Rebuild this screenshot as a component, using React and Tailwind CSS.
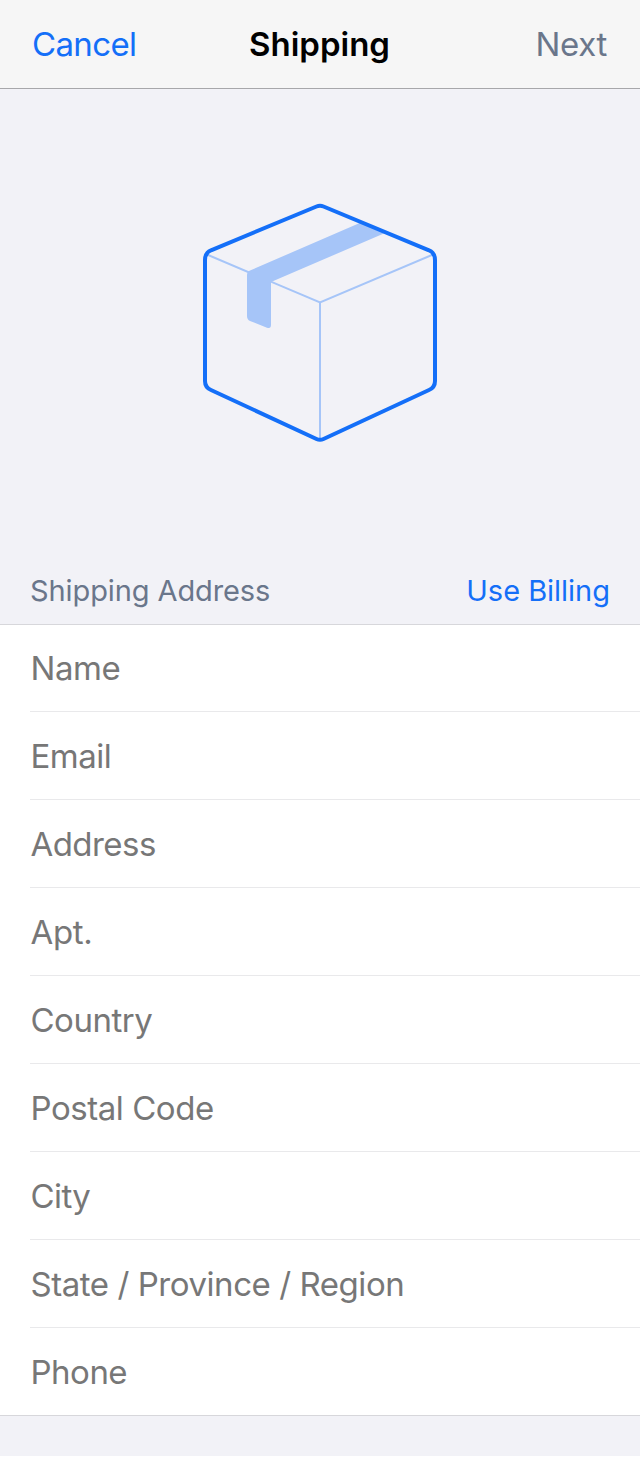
const fields = [
  { label: 'Name', spacing: 'tracking-[-0.4px]' },
  { label: 'Email', spacing: 'tracking-[-0.5px]' },
  { label: 'Address', spacing: 'tracking-[-0.55px]' },
  { label: 'Apt.', spacing: 'tracking-[-0.35px]' },
  { label: 'Country', spacing: 'tracking-[-0.5px]' },
  { label: 'Postal Code', spacing: 'tracking-[-0.45px]' },
  { label: 'City', spacing: 'tracking-[-0.6px]' },
  { label: 'State / Province / Region', spacing: 'tracking-[-0.45px]' },
  { label: 'Phone', spacing: 'tracking-[-0.5px]' },
];

function PackageIcon() {
  return (
    <svg width="240" height="244" viewBox="200 200 240 244" fill="none" aria-hidden="true">
      <path d="M207 254.500L320 302.500L433 254.500M320 302.500V439" stroke="#a6c5f8" strokeWidth="2" />
      <path d="M362 222L250 270.500Q247 272 247 275V316Q247 319.500 250 321L267 327.700Q271 329 271 325V282L385 233Z" fill="#a6c5f8" />
      <path d="M316.500 206.500Q320 205 323.500 206.500L429 250.300Q435 253 435 260V381Q435 387.500 429 390L323.500 439Q320 440.700 316.500 439L211 390Q205 387.500 205 381V260Q205 253 211 250.300Z" stroke="#146ff8" strokeWidth="4" />
    </svg>
  );
}

export default function App() {
  return (
    <main className="flex h-[1457px] w-[640px] flex-col bg-white font-['Inter',sans-serif]">
      <header className="grid h-[89px] grid-cols-3 items-center border-b border-[#a7a7aa] bg-[#f6f6f6] pt-0.5 pr-[33px] pl-8 text-[33px]">
        <button className="text-left tracking-[-0.65px] text-[#146ff8]">Cancel</button>
        <h1 className="text-center font-semibold text-black">Shipping</h1>
        <button className="text-right tracking-[-0.3px] text-[#6a768b]">Next</button>
      </header>
      <section className="flex h-[535px] flex-col bg-[#f2f2f7]">
        <div className="flex h-[467px] items-center justify-center pb-px"><PackageIcon /></div>
        <div className="flex h-[68px] items-center justify-between px-[30px] pt-0.5 text-[29px]">
          <h2 className="tracking-[-0.1px] text-[#6a768b]">Shipping Address</h2>
          <button className="tracking-[-0.02px] text-[#146ff8]">Use Billing</button>
        </div>
      </section>
      <form className="border-y border-[#d7d7db] bg-white pl-[30px]">
        {fields.map(({ label, spacing }) => (
          <div key={label} className="flex h-[88px] items-center border-b border-[#e9e9eb] pt-0.5 pl-[0.5px] text-[33px] text-[#777777] first:h-[87px] last:h-[87px] last:border-0">
            <span className={spacing}>{label}</span>
          </div>
        ))}
      </form>
      <footer className="h-10 bg-[#f2f2f7]" />
    </main>
  );
}
